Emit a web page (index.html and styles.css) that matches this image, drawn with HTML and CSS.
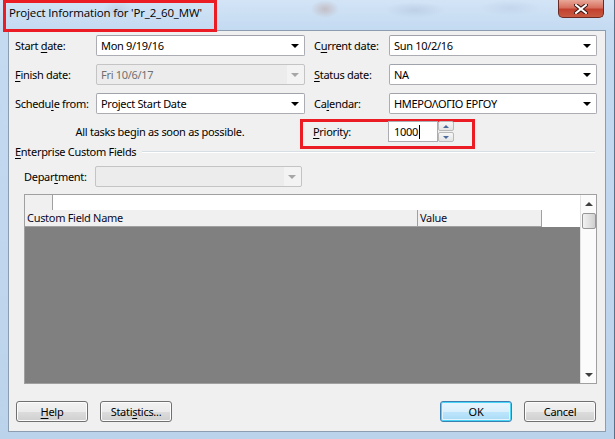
FILE: index.html
```html
<!DOCTYPE html>
<html lang="en">
<head>
    <meta charset="UTF-8">
    <title>Project Information</title>
    <link rel="stylesheet" href="styles.css">
</head>
<body>
    <div class="window">
        <div class="titlebar">
            <span class="title">Project Information for 'Pr_2_60_MW'</span>
            <button class="close">
                <svg width="14" height="10" viewBox="0 0 14 10">
                    <path d="M2 1 L12 9 M12 1 L2 9" stroke="#3a1410" stroke-width="4" stroke-linecap="square"/>
                    <path d="M2 1 L12 9 M12 1 L2 9" stroke="#fff" stroke-width="2" stroke-linecap="square"/>
                </svg>
            </button>
        </div>
        <div class="mark"></div>

        <div class="client">
            <div class="fields">
                <label class="lbl">Start <u>d</u>ate:</label>
                <div class="combo"><span>Mon 9/19/16</span><i class="arrow"></i></div>
                <label class="lbl right">C<u>u</u>rrent date:</label>
                <div class="combo"><span>Sun 10/2/16</span><i class="arrow"></i></div>

                <label class="lbl"><u>F</u>inish date:</label>
                <div class="combo disabled"><span>Fri 10/6/17</span><i class="arrow"></i></div>
                <label class="lbl right"><u>S</u>tatus date:</label>
                <div class="combo"><span>NA</span><i class="arrow"></i></div>

                <label class="lbl">Schedu<u>l</u>e from:</label>
                <div class="combo"><span>Project Start Date</span><i class="arrow"></i></div>
                <label class="lbl right">Ca<u>l</u>endar:</label>
                <div class="combo"><span>ΗΜΕΡΟΛΟΓΙΟ ΕΡΓΟΥ</span><i class="arrow"></i></div>
            </div>

            <div class="info-row">
                <p class="hint">All tasks begin as soon as possible.</p>
                <div class="priority">
                    <label class="lbl"><u>P</u>riority:</label>
                    <div class="num">1000<span class="caret"></span></div>
                    <div class="spin">
                        <button class="spin-btn"><i class="up"></i></button>
                        <button class="spin-btn"><i class="down"></i></button>
                    </div>
                </div>
            </div>

            <div class="group-title">
                <span><u>E</u>nterprise Custom Fields</span>
                <div class="rule"></div>
            </div>

            <div class="dept-row">
                <label class="lbl">Depar<u>t</u>ment:</label>
                <div class="combo disabled"><span></span><i class="arrow"></i></div>
            </div>

            <div class="grid">
                <div class="grid-main">
                    <div class="edit-row">
                        <div class="corner"></div>
                        <div class="edit-cell"></div>
                    </div>
                    <div class="head-row">
                        <div class="head name">Custom Field Name</div>
                        <div class="head value">Value</div>
                    </div>
                    <div class="grid-body"></div>
                </div>
                <div class="scroll">
                    <i class="sc-up"></i>
                    <div class="thumb"></div>
                    <i class="sc-down"></i>
                </div>
            </div>

            <div class="buttons">
                <button class="btn"><u>H</u>elp</button>
                <button class="btn">Stati<u>s</u>tics...</button>
                <div class="spacer"></div>
                <button class="btn default">OK</button>
                <button class="btn">Cancel</button>
            </div>
        </div>
    </div>
</body>
</html>
```

FILE: styles.css
```css
*{
    margin: 0;
    padding: 0;
    box-sizing: border-box;
}

body{
    width: 615px;
    height: 439px;
    overflow: hidden;
    background: #c3d8ef;
    font-family: "Noto Sans", "Open Sans", sans-serif;
    font-size: 11px;
    letter-spacing: -0.3px;
    color: #000;
}

u{
    text-decoration: underline;
    text-underline-offset: 2px;
}

.window{
    position: relative;
    width: 615px;
    height: 439px;
    background: linear-gradient(to bottom, #d3e4f6 0px, #c4daf1 30px, #bcd3ec 439px);
    border-right: 1px solid #5b6f86;
}

.titlebar{
    height: 30px;
    display: flex;
    align-items: flex-start;
    padding-left: 9px;
    background:
        radial-gradient(ellipse 16px 9px at 118px 10px, rgba(150, 160, 190, .25), transparent),
        radial-gradient(ellipse 14px 9px at 325px 9px, rgba(170, 110, 90, .3), transparent),
        radial-gradient(ellipse 30px 8px at 415px 10px, rgba(140, 160, 190, .25), transparent),
        radial-gradient(ellipse 30px 8px at 510px 8px, rgba(150, 170, 200, .2), transparent);
}

.title{
    font-family: "Open Sans", sans-serif;
    font-size: 11.5px;
    letter-spacing: -0.15px;
    line-height: 14px;
    margin-top: 6px;
    color: #000;
}

.close{
    margin-left: auto;
    margin-right: 10px;
    width: 46px;
    height: 18px;
    border: 1px solid #6b2a24;
    border-top: none;
    border-radius: 0 0 5px 5px;
    background: linear-gradient(to bottom, #e8a898 0%, #d7705f 45%, #c2412f 55%, #c95a40 100%);
    display: flex;
    align-items: center;
    justify-content: center;
}

.mark{
    position: absolute;
    left: 3px;
    top: 0;
    width: 214px;
    height: 32px;
    border: 3px solid #ec1c24;
}

.client{
    margin: 0 8px 0 8px;
    height: 402px;
    background: #f0f0f0;
    border: 1px solid #8d9db0;
    padding: 4px 8px 0 6px;
}

.fields{
    display: grid;
    grid-template-columns: 81px 209px 84px 208px;
    grid-auto-rows: 21px;
    row-gap: 8px;
}

.lbl{
    display: block;
    line-height: 21px;
    white-space: nowrap;
}

.lbl.right{
    padding-left: 9px;
}

.combo{
    height: 21px;
    display: flex;
    align-items: center;
    padding-left: 4px;
    background: #fff;
    border: 1px solid #abadb3;
    border-top-color: #a0a3aa;
    border-radius: 2px;
    white-space: nowrap;
}

.combo .arrow{
    margin-left: auto;
    margin-right: 5px;
    width: 0;
    height: 0;
    border-left: 4px solid transparent;
    border-right: 4px solid transparent;
    border-top: 4px solid #000;
}

.combo.disabled{
    background: linear-gradient(to right, #ececec 0, #ececec calc(100% - 17px), #f3f3f3 calc(100% - 17px));
    border-color: #c4c4c4;
    color: #707070;
}

.combo.disabled .arrow{
    border-top-color: #a6a6a6;
}

.info-row{
    display: flex;
    align-items: flex-start;
    margin-top: 5px;
}

.hint{
    width: 290px;
    margin-top: 2px;
    line-height: 21px;
    text-align: center;
}

.priority{
    margin-left: -5px;
    width: 175px;
    height: 30px;
    border: 3px solid #ec1c24;
    display: flex;
    align-items: flex-start;
    padding-left: 10px;
}

.priority .lbl{
    width: 75px;
    height: 21px;
    margin-top: -1px;
}

.num{
    width: 50px;
    height: 21px;
    margin-top: -1px;
    background: #fff;
    border: 1px solid #abadb3;
    display: flex;
    align-items: center;
    padding-left: 5px;
}

.caret{
    display: inline-block;
    width: 1px;
    height: 14px;
    margin-left: 1px;
    background: #000;
}

.spin{
    margin-top: -1px;
    width: 16px;
    height: 21px;
    display: flex;
    flex-direction: column;
    gap: 1px;
}

.spin-btn{
    flex: 1;
    border: 1px solid #b9b9b9;
    border-radius: 2px;
    background: linear-gradient(to bottom, #f7f7f7, #e4e4e4);
    display: flex;
    align-items: center;
    justify-content: center;
}

.spin-btn i{
    width: 0;
    height: 0;
    border-left: 3px solid transparent;
    border-right: 3px solid transparent;
}

.spin-btn .up{
    border-bottom: 3px solid #4c6a9c;
}

.spin-btn .down{
    border-top: 3px solid #4c6a9c;
}

.group-title{
    margin-top: -4px;
    height: 14px;
    display: flex;
    align-items: center;
    line-height: 14px;
    white-space: nowrap;
}

.rule{
    flex: 1;
    margin-left: 6px;
    margin-right: 2px;
    height: 2px;
    border-top: 1px solid #d5dfe5;
    border-bottom: 1px solid #fff;
}

.dept-row{
    display: flex;
    margin-top: 7px;
    padding-left: 9px;
    height: 21px;
}

.dept-row .lbl{
    width: 71px;
}

.dept-row .combo{
    width: 207px;
}

.grid{
    margin-top: 7px;
    margin-left: 9px;
    width: 573px;
    height: 190px;
    border: 1px solid #a0a0a0;
    display: flex;
    background: #fff;
}

.grid-main{
    flex: 1;
    display: flex;
    flex-direction: column;
}

.edit-row{
    height: 15px;
    display: flex;
}

.corner{
    width: 28px;
    background: #f0f0f0;
    border-right: 1px solid #a0a0a0;
}

.edit-cell{
    flex: 1;
    background: #fff;
}

.head-row{
    height: 17px;
    display: flex;
    background: #fff;
}

.head{
    background: #f0f0f0;
    border-right: 1px solid #a0a0a0;
    border-bottom: 1px solid #a0a0a0;
    line-height: 16px;
    padding-left: 2px;
    color: #0a0a28;
    white-space: nowrap;
}

.head.name{
    width: 393px;
}

.head.value{
    width: 124px;
}

.grid-body{
    flex: 1;
    background: #808080;
}

.scroll{
    width: 16px;
    background: #fbfbfb;
    border-left: 1px solid #e3e3e3;
    display: flex;
    flex-direction: column;
    align-items: center;
    padding-top: 7px;
}

.sc-up, .sc-down{
    width: 0;
    height: 0;
    border-left: 4px solid transparent;
    border-right: 4px solid transparent;
}

.sc-up{
    border-bottom: 4px solid #404040;
}

.sc-down{
    margin-top: auto;
    margin-bottom: 6px;
    border-top: 4px solid #404040;
}

.thumb{
    margin-top: 7px;
    width: 14px;
    height: 16px;
    border: 1px solid #979797;
    border-radius: 2px;
    background: linear-gradient(to right, #f2f2f2, #dedede 60%, #cfcfcf);
}

.buttons{
    display: flex;
    gap: 12px;
    margin-top: 17px;
    padding: 0 1px;
}

.spacer{
    flex: 1;
}

.btn{
    width: 72px;
    height: 21px;
    font-family: inherit;
    font-size: 11px;
    letter-spacing: -0.3px;
    color: #000;
    border: 1px solid #707070;
    border-radius: 3px;
    background: linear-gradient(to bottom, #f2f2f2 0%, #ebebeb 50%, #dddddd 51%, #cfcfcf 100%);
    box-shadow: inset 0 0 0 1px #fcfcfc;
}

.btn.default{
    border-color: #3c7fb1;
    box-shadow: inset 0 0 0 1px #48d6f8, inset 0 0 0 2px #e5f4fc;
    background: linear-gradient(to bottom, #eaf6fd 0%, #d9f0fc 50%, #bee6fd 51%, #a7d9f5 100%);
}
```
